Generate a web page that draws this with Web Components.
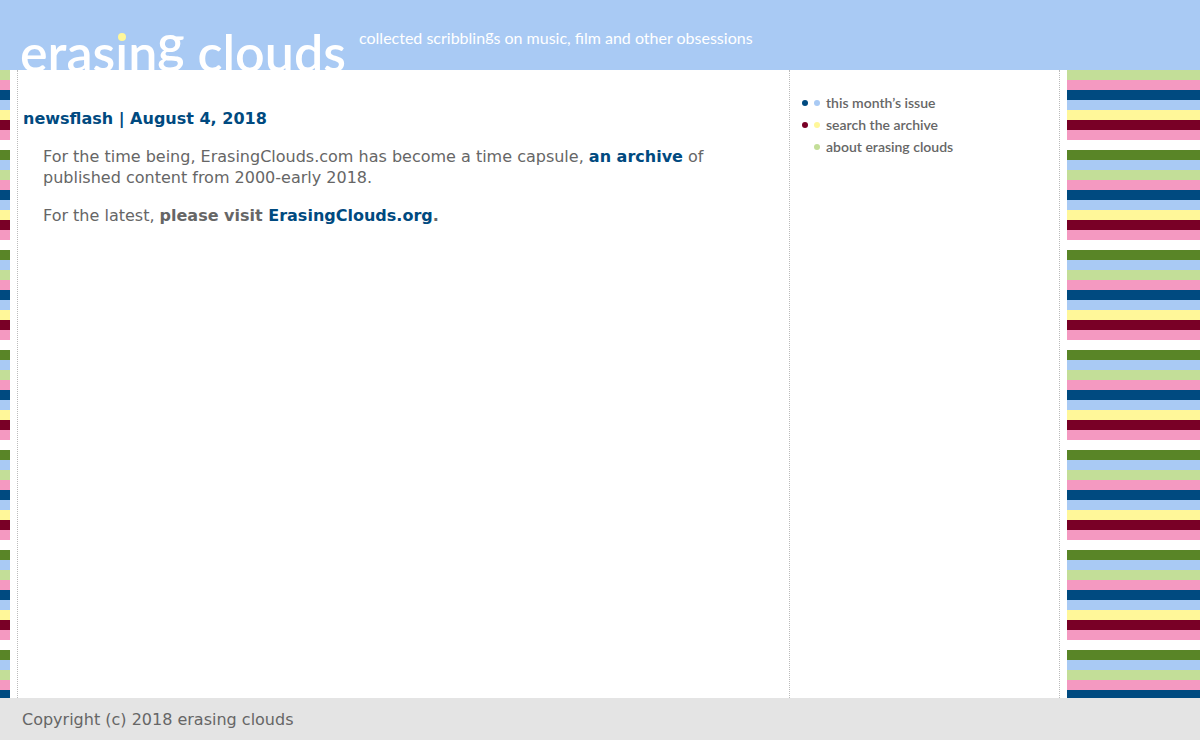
<!DOCTYPE html>
<html lang="en">
<head>
<meta charset="utf-8">
<title>erasing clouds</title>
<style>
  body { margin: 0; background: #fff; color: #666; font: 16px/21px Verdana, "DejaVu Sans", sans-serif; }
</style>
</head>
<body>
<ec-page>
  <ec-masthead slot="header"></ec-masthead>
  <ec-article>
    <span slot="title">newsflash | August 4, 2018</span>
    <ec-news></ec-news>
  </ec-article>
  <ec-nav slot="side"></ec-nav>
  <ec-footer slot="footer">Copyright (c) 2018 erasing clouds</ec-footer>
</ec-page>
<script>
const define = (name, html) => {
  const template = document.createElement('template');
  template.innerHTML = html;
  customElements.define(name, class extends HTMLElement {
    constructor() {
      super();
      this.attachShadow({ mode: 'open' }).append(template.content.cloneNode(true));
    }
  });
};

define('ec-stripes', `
<style>
  :host {
    display: block;
    background: repeating-linear-gradient(
      #c3de98 0 10px, #f499c1 10px 20px, #004a80 20px 30px, #a9caf4 30px 40px, #fff799 40px 50px,
      #790026 50px 60px, #f499c1 60px 70px, #fff 70px 80px, #598527 80px 90px, #a9caf4 90px 100px);
  }
</style>`);

define('ec-page', `
<style>
  :host { display: flex; flex-direction: column; min-height: 100vh; }
  .body { flex: 1; display: grid; grid-template-columns: 10px 1fr 133px; }
  .columns { display: grid; grid-template-columns: 1fr 270px; margin: 0 7px;
    border-left: 1px dotted #bbb; border-right: 1px dotted #bbb; }
  aside { border-left: 1px dotted #bbb; }
</style>
<slot name="header"></slot>
<div class="body">
  <ec-stripes></ec-stripes>
  <div class="columns"><main><slot></slot></main><aside><slot name="side"></slot></aside></div>
  <ec-stripes></ec-stripes>
</div>
<slot name="footer"></slot>`);

define('ec-masthead', `
<style>
  :host { display: block; background: #a9caf4; color: #fff; height: 70px; font-family: Lato, sans-serif; }
  header { display: flex; align-items: flex-start; gap: 13px; padding: 22px 20px 0; }
  h1 { margin: 0; font-size: 52px; line-height: 60px; font-weight: 600; white-space: nowrap; }
  p { margin: 0; padding-top: 6px; font-size: 16px; line-height: 20px; white-space: nowrap; }
  .i, .g, .small-g { position: relative; }
  .i::before { content: ""; position: absolute; left: 0; right: 0; top: 8px; height: 15px; background: #a9caf4; }
  .i::after { content: ""; position: absolute; left: 50%; top: 12px; width: 8px; height: 8px; margin-left: -4px; border-radius: 50%; background: #fff799; }
  .g { bottom: 10px; }
  .small-g { bottom: 3px; }
</style>
<header>
  <h1>eras<span class="i">i</span>n<span class="g">g</span> clouds</h1>
  <p>collected scribblin<span class="small-g">g</span>s on music, film and other obsessions</p>
</header>`);

define('ec-article', `
<style>
  :host { display: block; padding: 38px 20px 38px 5px; }
  h2 { margin: 0 0 17px; font-size: 16px; line-height: 21px; color: #004a80; }
  .text { padding-left: 20px; }
</style>
<h2><slot name="title"></slot></h2>
<div class="text"><slot></slot></div>`);

define('ec-news', `
<style>
  :host { display: block; }
  p { margin: 0 0 17px; }
  a { color: #004a80; font-weight: 700; text-decoration: none; }
</style>
<p>For the time being, ErasingClouds.com has become a time capsule, <a href="#archive">an archive</a> of published content from 2000-early 2018.</p>
<p>For the latest, <b>please visit <a href="#org">ErasingClouds.org</a>.</b></p>`);

define('ec-nav', `
<style>
  :host { display: block; padding: 22px 12px; font: 600 14px/22px Lato, sans-serif; }
  ul { list-style: none; margin: 0; padding: 0; }
  a { display: grid; grid-template-columns: 6px 6px 1fr; column-gap: 6px; align-items: center; color: #666; text-decoration: none; }
  i { width: 6px; height: 6px; border-radius: 50%; }
  .navy { background: #004a80; } .blue { background: #a9caf4; }
  .maroon { background: #790026; } .yellow { background: #fff799; } .green { background: #c3de98; }
</style>
<nav><ul>
  <li><a href="#issue"><i class="navy"></i><i class="blue"></i><span>this month’s issue</span></a></li>
  <li><a href="#search"><i class="maroon"></i><i class="yellow"></i><span>search the archive</span></a></li>
  <li><a href="#about"><i></i><i class="green"></i><span>about erasing clouds</span></a></li>
</ul></nav>`);

define('ec-footer', `
<style>
  :host { display: block; background: #e4e4e4; }
  footer { padding: 11px 22px 10px; line-height: 21px; }
</style>
<footer><slot></slot></footer>`);
</script>
</body>
</html>
